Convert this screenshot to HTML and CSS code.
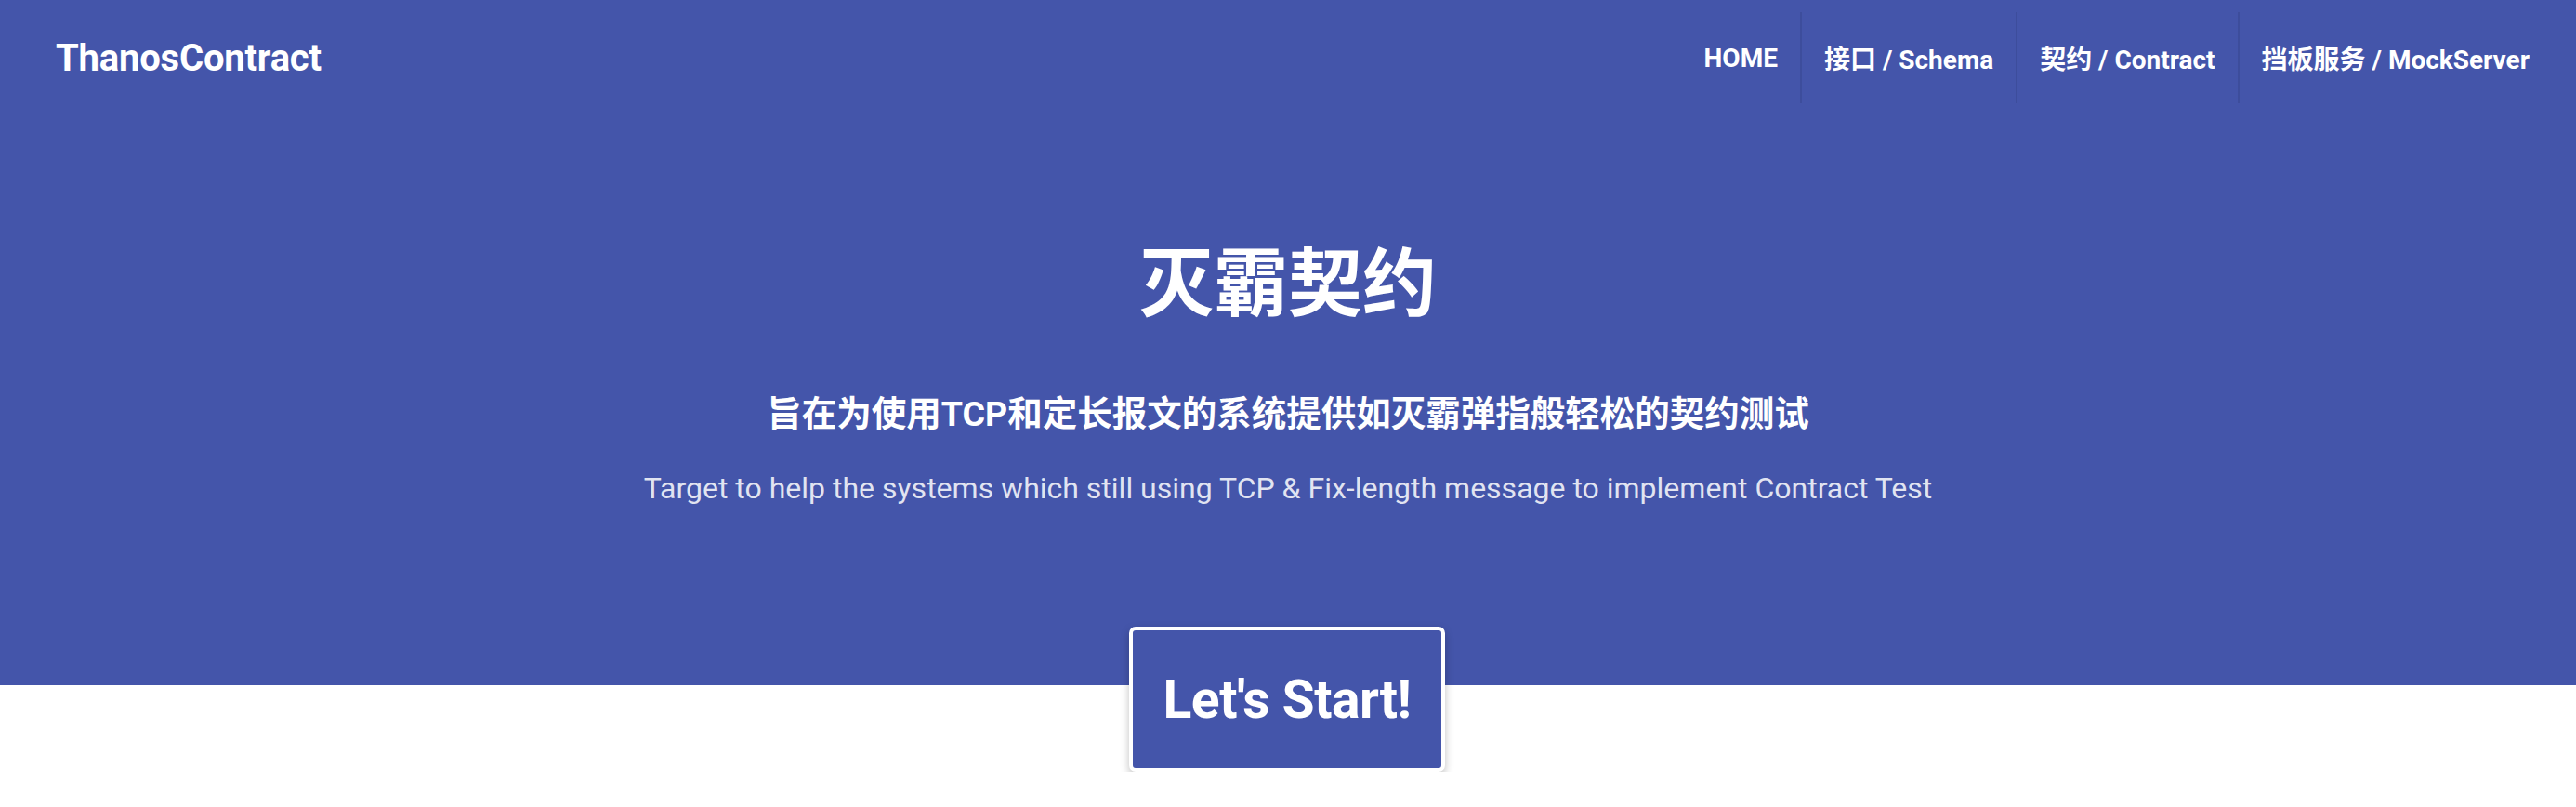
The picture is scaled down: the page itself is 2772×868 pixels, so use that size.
FILE: index.html
```html
<!DOCTYPE html>
<html lang="zh-CN">
<head>
<meta charset="utf-8">
<title>ThanosContract</title>
<link rel="stylesheet" href="styles.css">
</head>
<body>
<div class="top">
  <header class="navbar">
    <a class="brand" href="#">ThanosContract</a>
    <nav class="nav">
      <a class="nav-item" href="#">HOME</a>
      <a class="nav-item" href="#">接口 / Schema</a>
      <a class="nav-item" href="#">契约 / Contract</a>
      <a class="nav-item" href="#">挡板服务 / MockServer</a>
    </nav>
  </header>
  <section class="hero">
    <h1 class="hero-title">灭霸契约</h1>
    <h2 class="hero-sub">旨在为使用TCP和定长报文的系统提供如灭霸弹指般轻松的契约测试</h2>
    <p class="hero-en">Target to help the systems which still using TCP &amp; Fix-length message to implement Contract Test</p>
  </section>
</div>
<div class="cta">
  <button class="start-btn">Let's Start!</button>
</div>
</body>
</html>
```

FILE: styles.css
```css
html, body {
  margin: 0;
  padding: 0;
  background: #ffffff;
}
body {
  font-family: Roboto, "Noto Sans CJK SC", "Noto Sans", sans-serif;
  color: #ffffff;
}
.top {
  background: #4455aa;
}
.navbar {
  height: 124px;
  display: flex;
  align-items: center;
  justify-content: space-between;
  padding: 0 26px 0 60px;
}
.brand {
  color: #ffffff;
  text-decoration: none;
  font-size: 40px;
  font-weight: 700;
  letter-spacing: -0.2px;
}
.nav {
  display: flex;
  align-items: center;
}
.nav-item {
  display: flex;
  align-items: center;
  height: 98px;
  padding: 0 24px;
  color: #ffffff;
  text-decoration: none;
  font-size: 28px;
  font-weight: 700;
}
.nav-item + .nav-item {
  border-left: 2px solid #3d4d9c;
}
.hero {
  display: flex;
  flex-direction: column;
  align-items: center;
  padding: 134px 0 188px;
  text-align: center;
}
.hero-title {
  margin: 0;
  font-size: 80px;
  line-height: 96px;
  font-weight: 700;
}
.hero-sub {
  margin: 64px 0 0;
  font-size: 37.5px;
  line-height: 54px;
  font-weight: 700;
}
.hero-en {
  margin: 29px 0 0;
  font-size: 32px;
  line-height: 48px;
  font-weight: 400;
  color: rgba(255, 255, 255, 0.85);
}
.cta {
  display: flex;
  justify-content: center;
  margin-top: -63px;
  padding-right: 2px;
}
.start-btn {
  box-sizing: border-box;
  width: 340px;
  height: 156px;
  background: #4455aa;
  color: #ffffff;
  border: 4px solid #ffffff;
  border-radius: 7px;
  box-shadow: 0 4px 10px rgba(0, 0, 0, 0.25);
  font-family: Roboto, "Noto Sans", sans-serif;
  font-size: 57px;
  font-weight: 700;
  letter-spacing: -0.5px;
  cursor: pointer;
}
```
